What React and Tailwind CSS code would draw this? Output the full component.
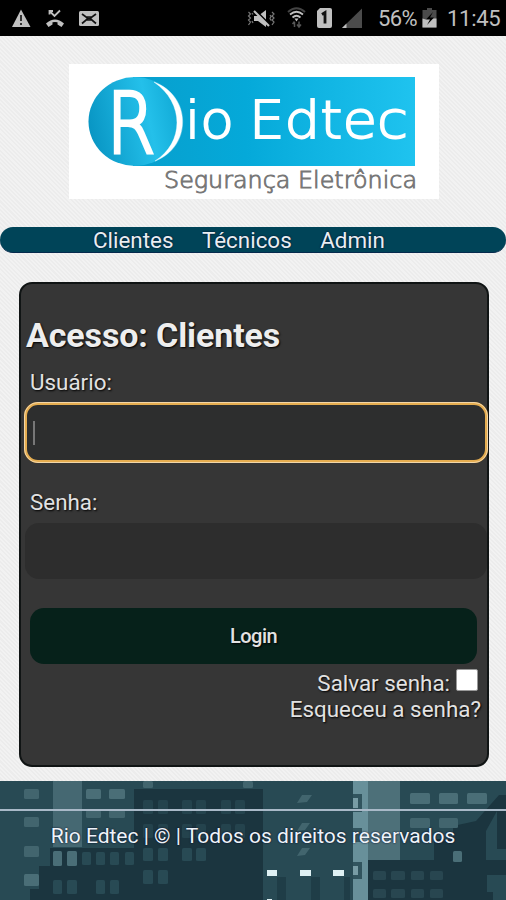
import React, { useState } from "react";

const NAV = ["Clientes", "Técnicos", "Admin"];

const shadow = "[text-shadow:1px_1px_2px_#000]";

// x, y, width, height, fill
const WINDOWS = [
  [24, 8, 15, 10, "#42656e"], [24, 36, 15, 10, "#42656e"], [24, 65, 15, 11, "#42656e"], [24, 93, 15, 12, "#4a6e77"],
  [86, 8, 15, 10, "#4a6e77"], [109, 8, 16, 10, "#4a6e77"], [86, 29, 15, 8, "#42656e"], [109, 29, 16, 8, "#42656e"],
  [53, 70, 9, 15, "#4a6e77"], [67, 70, 10, 15, "#4a6e77"],
  [82, 71, 9, 13, "#284a54"], [96, 71, 9, 13, "#284a54"], [110, 71, 9, 13, "#284a54"], [125, 71, 9, 13, "#284a54"],
  [53, 99, 9, 14, "#284a54"], [67, 99, 10, 14, "#284a54"], [96, 99, 9, 14, "#284a54"], [110, 99, 9, 14, "#284a54"],
  [143, 0, 10, 7, "#42656e"], [243, 0, 10, 7, "#42656e"],
  [143, 19, 10, 14, "#24434d"], [158, 19, 10, 14, "#24434d"], [182, 19, 10, 14, "#24434d"], [196, 19, 10, 14, "#24434d"],
  [221, 19, 10, 14, "#24434d"], [235, 19, 10, 14, "#24434d"],
  [143, 43, 10, 14, "#24434d"], [158, 43, 10, 14, "#24434d"], [182, 43, 10, 14, "#24434d"], [196, 43, 10, 14, "#24434d"],
  [221, 43, 10, 14, "#24434d"], [235, 43, 10, 14, "#24434d"],
  [143, 67, 10, 13, "#284a54"], [158, 67, 10, 13, "#284a54"], [182, 67, 10, 13, "#284a54"], [196, 67, 10, 13, "#284a54"],
  [143, 89, 10, 14, "#284a54"], [158, 89, 10, 14, "#284a54"],
  [410, 12, 20, 11, "#4a6e77"], [439, 12, 19, 11, "#4a6e77"], [467, 12, 20, 11, "#4a6e77"],
  [410, 37, 20, 10, "#42656e"], [439, 37, 19, 10, "#42656e"], [453, 70, 9, 11, "#4a6e77"],
  [373, 90, 13, 9, "#284650"], [391, 90, 14, 9, "#284650"], [411, 90, 13, 9, "#284650"], [430, 90, 13, 9, "#284650"],
  [373, 108, 13, 9, "#284650"], [391, 108, 14, 9, "#284650"], [411, 108, 13, 9, "#284650"], [430, 108, 13, 9, "#284650"],
];

function City() {
  return (
    <svg className="absolute inset-0 size-full" viewBox="0 0 506 119" preserveAspectRatio="none">
      <rect width="506" height="119" fill="#284a54" />
      <rect x="53" width="29" height="66" fill="#456872" />
      <path d="M134 8H263V119H30V108H39V85H50V67H134Z" fill="#1b353f" />
      <path d="M277 96h9v23h-9zM311 96h9v23h-9zM344 96h6v23h-6z" fill="#1f3d47" />
      <rect x="353" width="15" height="119" fill="#68909a" />
      <rect x="368" width="32" height="79" fill="#4d7079" />
      <path d="M353 13h9v18h-9zM353 47h9v14h-9zM353 81h9v17h-9z" fill="#31545e" />
      <path d="M353 17h5v10h-5zM353 85h5v9h-5z" fill="#789ca5" />
      <path d="M368 79H434V58H453V45L476 40L499 14H506V119H368Z" fill="#1b353f" />
      <path d="M486 50L497 30V68H506V79H486Z" fill="#284a54" />
      <path d="M487 94h19v25h-13v-8h-6z" fill="#284a54" />
      <path d="M297 22l5-8h10l-5 7zM297 50l5-8h8l-5 7zM297 75l5-8h8l-5 7z" fill="#42656e" />
      {WINDOWS.map(([x, y, w, h, fill], i) => (
        <rect key={i} x={x} y={y} width={w} height={h} rx="1.5" fill={fill} />
      ))}
      <path d="M267 89h10v6h-10zM300 89h11v6h-11zM333 89h11v6h-11zM267 118h5v1h-5z" fill="#dff0f3" />
    </svg>
  );
}

function StatusBar() {
  return (
    <div className="flex h-9 items-center bg-black pl-3 pr-[5px] text-[#c0c0c0]">
      <svg className="h-9 w-[90px]" viewBox="12 0 90 36" fill="currentColor">
        <path d="M21 9.5L30.500 27H12Z" />
        <path d="M21 15v6M21 23v2" stroke="#333" strokeWidth="2" />
        <path d="M46 23.500Q55 15.500 64 23.500L61.500 27L57.500 24.500V22.300Q55 21.500 52.500 22.300V24.500L48.500 27Z" />
        <path d="M49.500 14.500V11H53M50 11.500L54.500 16L60 10.500" fill="none" stroke="currentColor" strokeWidth="1.800" />
        <rect x="79" y="11" width="20" height="15" rx="1.500" />
        <path d="M82 14l4 3h6l4-3M82 23.500l4-3.500h6l4 3.500M86 17l2 1.500-2 1.500M92 17l-2 1.500 2 1.500" fill="none" stroke="#111" strokeWidth="1.700" />
      </svg>
      <svg className="ml-auto h-9 w-[118px]" viewBox="247 0 118 36" fill="currentColor">
        <path d="M254 16h4l8-6v17l-8-6h-4z" />
        <path d="M256 11L269 24" stroke="#000" strokeWidth="2" />
        <path d="M254 11L269 26" stroke="currentColor" strokeWidth="2.200" />
        <path d="M248.500 12l2 2-2 2 2 2-2 2 2 2-2 3M252 13l1 1.500M252 21l1 2M272 12l2 2-2 2 2 2-2 2 2 2-2 3M270 15l1 1.500-1 2 1 2" fill="none" stroke="#777" strokeWidth="1.200" />
        <path d="M288 12Q296.500 4.500 305 12" fill="none" stroke="#444" strokeWidth="2" />
        <path d="M290 14.500Q296.500 9 303 14.500M292.500 17.500Q296.500 14 300.500 17.500" fill="none" stroke="currentColor" strokeWidth="1.700" />
        <path d="M294.500 18.500h4l-2 3z" />
        <path d="M294.500 27v-5m-2 2l2-2.500M299 21.500v5m-2-2l2 2.500 2-2.500" fill="none" stroke="#555" strokeWidth="1.500" />
        <path d="M317 11l3-3h10q2 0 2 2v16q0 2-2 2h-11q-2 0-2-2z" />
        <path d="M322 14.500l3-2v11" fill="none" stroke="#111" strokeWidth="2.800" />
        <path d="M362 8.500V28H342Z" fill="#4b4b4b" />
        <path d="M346.500 23.500V28H342Z" />
      </svg>
      <span className="ml-[13px] w-[40px] whitespace-nowrap pt-[2px] text-[22px] leading-9 tracking-[-0.6px]">56%</span>
      <svg className="ml-[4px] h-9 w-[15px]" viewBox="422 0 15 36">
        <path d="M427 8h5v2h4.500v17.500h-14V10H427Z" fill="#4b4b4b" />
        <path d="M422.500 18.500l3 1 3-1h8v9h-14z" fill="#c0c0c0" />
        <path d="M433 12L426 19.500H430L427 25L434 17.500H430Z" fill="#000" />
      </svg>
      <span className="ml-[10px] w-[54px] whitespace-nowrap pt-[2px] text-[22px] leading-9 tracking-[-0.3px]">11:45</span>
    </div>
  );
}

function Logo() {
  return (
    <svg className="block h-[135px] w-[370px] font-extralight" viewBox="0 0 370 135" fontFamily="DejaVu Sans">
      <defs>
        <linearGradient id="band">
          <stop offset="0" stopColor="#079fcd" />
          <stop offset="0.4" stopColor="#05a9d9" />
          <stop offset="1" stopColor="#1fc3ef" />
        </linearGradient>
        <linearGradient id="ball" x1="0" y1="0.6" x2="1" y2="0.4">
          <stop offset="0" stopColor="#0895c3" />
          <stop offset="0.65" stopColor="#24c0ea" />
          <stop offset="1" stopColor="#10a9d5" />
        </linearGradient>
      </defs>
      <rect width="370" height="135" fill="#fff" />
      <path d="M64 13H346V102H64Z" fill="url(#band)" />
      <ellipse cx="66" cy="57.500" rx="46.500" ry="44.500" fill="url(#ball)" />
      <path d="M85 18C123 32 123 83 86 97C115 79 116 39 85 18Z" fill="#fff" stroke="#fff" strokeWidth="0.400" />
      <text x="38" y="89" fill="#fff" stroke="#fff" strokeWidth="4" fontSize="84" textLength="48" lengthAdjust="spacingAndGlyphs">R</text>
      <text x="116" y="74" fill="#fff" stroke="#fff" strokeWidth="1.800" fontSize="51" textLength="49" lengthAdjust="spacingAndGlyphs">io</text>
      <text x="180" y="74" fill="#fff" stroke="#fff" strokeWidth="1.800" fontSize="52" textLength="159" lengthAdjust="spacingAndGlyphs">Edtec</text>
      <text x="95" y="124" fill="#777" stroke="#777" strokeWidth="0.900" fontSize="23" textLength="253" lengthAdjust="spacingAndGlyphs">Segurança Eletrônica</text>
    </svg>
  );
}

export default function App() {
  const [user, setUser] = useState("");
  const [password, setPassword] = useState("");
  const [save, setSave] = useState(false);

  return (
    <div className="flex h-[900px] w-[506px] flex-col overflow-hidden bg-[#efefef] bg-[repeating-linear-gradient(45deg,#f2f2f2_0px,#f2f2f2_1.5px,#ececec_1.5px,#ececec_3px)] font-['Roboto',sans-serif] text-[22.4px] leading-[26px]">
      <StatusBar />

      <header className="flex justify-center pl-px pt-7">
        <Logo />
      </header>

      <nav className="mt-7 flex h-[26px] gap-[28.5px] rounded-full border-b border-[#062a4d] bg-[#004458] pl-[93px] text-[#e8eef2]">
        {NAV.map((item) => (
          <a key={item} href="#" className="[text-shadow:0_0_2px_#002]">{item}</a>
        ))}
      </nav>

      {/* Login */}
      <main className="ml-[19px] mt-[29px] h-[485px] w-[470px] rounded-[13px] border-2 border-[#101414] bg-[#363636] pl-1 text-[#e2e2e2]">
        <h1 className={`mt-[32px] pl-px text-[34px] font-bold leading-[38px] tracking-[-0.12px] text-[#eee] ${shadow}`}>Acesso: Clientes</h1>
        <form onSubmit={(e) => e.preventDefault()}>
          <label className={`mt-[15px] block pl-[5px] ${shadow}`}>Usuário:</label>
          <div className="-ml-px mt-[7px] flex h-[61px] w-[464px] items-center rounded-[14px] border-[3px] border-[#e5ad50] bg-[#2d2e2e] pl-[6px] outline outline-1 -outline-offset-1 outline-[#f2d6a8]">
            <span className="h-6 w-[2px] bg-[#777]" />
            <input
              className="h-full w-full bg-transparent outline-none"
              value={user}
              onChange={(e) => setUser(e.target.value)}
            />
          </div>
          <label className={`mt-[26px] block pl-[5px] ${shadow}`}>Senha:</label>
          <input
            type="password"
            className="mt-[8px] block h-[56px] w-[462px] rounded-[14px] bg-[#2d2d2d] px-2 outline-none"
            value={password}
            onChange={(e) => setPassword(e.target.value)}
          />
          <button className={`ml-[5px] mt-[29px] block h-[56px] w-[447px] rounded-[14px] bg-[#06211a] text-[20px] font-medium tracking-[-0.5px] ${shadow}`}>
            Login
          </button>
          <label className={`mt-[5px] flex items-start justify-end pr-[9px] ${shadow}`}>
            <span className="pt-px">Salvar senha:</span>
            <input
              type="checkbox"
              className="ml-[6px] size-[22px] appearance-none rounded-[2px] border border-[#999] bg-white checked:bg-[#004458]"
              checked={save}
              onChange={(e) => setSave(e.target.checked)}
            />
          </label>
          <a href="#" className={`block pr-[6px] text-right ${shadow}`}>Esqueceu a senha?</a>
        </form>
      </main>

      <footer className="relative mt-auto h-[119px] overflow-hidden">
        <City />
        <div className="relative mt-7 border-t-2 border-[#a9b9c8] pt-[12px] text-center text-[21px] text-[#eef4fa] [text-shadow:0_0_2px_#002]">
          Rio Edtec | © | Todos os direitos reservados
        </div>
      </footer>
    </div>
  );
}
